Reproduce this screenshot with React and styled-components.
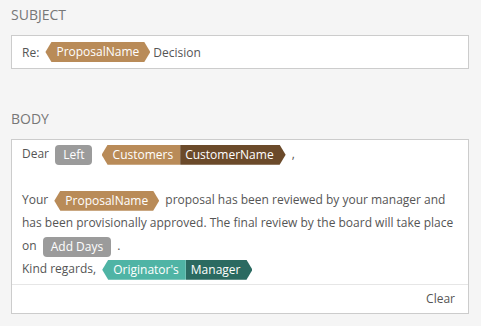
import React from "react";
import styled, { createGlobalStyle, css } from "styled-components";

const GlobalStyle = createGlobalStyle`
  body {
    margin: 0;
    background: #f5f5f5;
    font-family: "Open Sans", "Liberation Sans", sans-serif;
    color: #555;
  }
`;

const colors = {
  tan: "#b98b58",
  brown: "#6b4a2a",
  teal: "#4fb4a5",
  darkTeal: "#2b6a61",
  grey: "#9b9b9b"
};

const Page = styled.div`
  padding: 0 12px 0 11px;
`;

const Label = styled.div`
  font-size: 14px;
  line-height: 18px;
  color: #777;
  text-transform: uppercase;
  margin-top: ${p => p.$top}px;
  margin-bottom: 11px;
`;

const SubjectBox = styled.div`
  display: flex;
  align-items: center;
  height: 32px;
  padding: 0 10px;
  background: #fff;
  border: 1px solid #ccc;
  font-size: 12px;
  white-space: pre;
`;

const BodyBox = styled.div`
  background: #fff;
  border: 1px solid #ccc;
  font-size: 12px;
`;

const Editor = styled.div`
  padding: 2px 10px 4px;
  line-height: 23px;
`;

const Line = styled.div`
  height: 23px;
  white-space: nowrap;
`;

const Footer = styled.div`
  border-top: 1px solid #e6e6e6;
  height: 28px;
  line-height: 28px;
  text-align: right;
  padding-right: 13px;
`;

const tip = 6;

const shapes = {
  round: css`
    border-radius: 4px;
    padding: 0 8px;
  `,
  both: css`
    padding: 0 11px 0 11px;
    clip-path: polygon(${tip}px 0, calc(100% - ${tip}px) 0, 100% 50%, calc(100% - ${tip}px) 100%, ${tip}px 100%, 0 50%);
  `,
  left: css`
    padding: 0 7px 0 11px;
    clip-path: polygon(${tip}px 0, 100% 0, 100% 100%, ${tip}px 100%, 0 50%);
  `,
  right: css`
    padding: 0 12px 0 5px;
    clip-path: polygon(0 0, calc(100% - ${tip}px) 0, 100% 50%, calc(100% - ${tip}px) 100%, 0 100%);
  `
};

const Chip = styled.span`
  display: inline-block;
  height: 20px;
  line-height: 20px;
  vertical-align: middle;
  color: #fff;
  font-size: 12px;
  background: ${p => p.$bg};
  ${p => shapes[p.$shape]}
`;

const Group = styled.span`
  display: inline-flex;
  vertical-align: middle;
  margin: 0 3px 0 3px;
`;

const Single = ({ bg, shape, children }) => (
  <Group>
    <Chip $bg={bg} $shape={shape}>
      {children}
    </Chip>
  </Group>
);

const Pair = ({ first, second, bg1, bg2 }) => (
  <Group>
    <Chip $bg={bg1} $shape="left">
      {first}
    </Chip>
    <Chip $bg={bg2} $shape="right">
      {second}
    </Chip>
  </Group>
);

export default function App() {
  return (
    <Page>
      <GlobalStyle />
      <Label $top={6}>Subject</Label>
      <SubjectBox>
        Re:{" "}
        <Single bg={colors.tan} shape="both">
          ProposalName
        </Single>{"  "}
        Decision
      </SubjectBox>
      <Label $top={41}>Body</Label>
      <BodyBox>
        <Editor>
          <Line>
            Dear <Single bg={colors.grey} shape="round">Left</Single>{" "}
            <Pair
              first="Customers"
              second="CustomerName"
              bg1={colors.tan}
              bg2={colors.brown}
            />{" "}
            ,
          </Line>
          <Line />
          <Line>
            Your <Single bg={colors.tan} shape="both">ProposalName</Single>{" "}
            proposal has been reviewed by your manager and
          </Line>
          <Line>
            has been provisionally approved. The final review by the board will
            take place
          </Line>
          <Line>
            on <Single bg={colors.grey} shape="round">Add Days</Single> .
          </Line>
          <Line>
            Kind regards,{" "}
            <Pair
              first="Originator's"
              second="Manager"
              bg1={colors.teal}
              bg2={colors.darkTeal}
            />
          </Line>
        </Editor>
        <Footer>Clear</Footer>
      </BodyBox>
    </Page>
  );
}
